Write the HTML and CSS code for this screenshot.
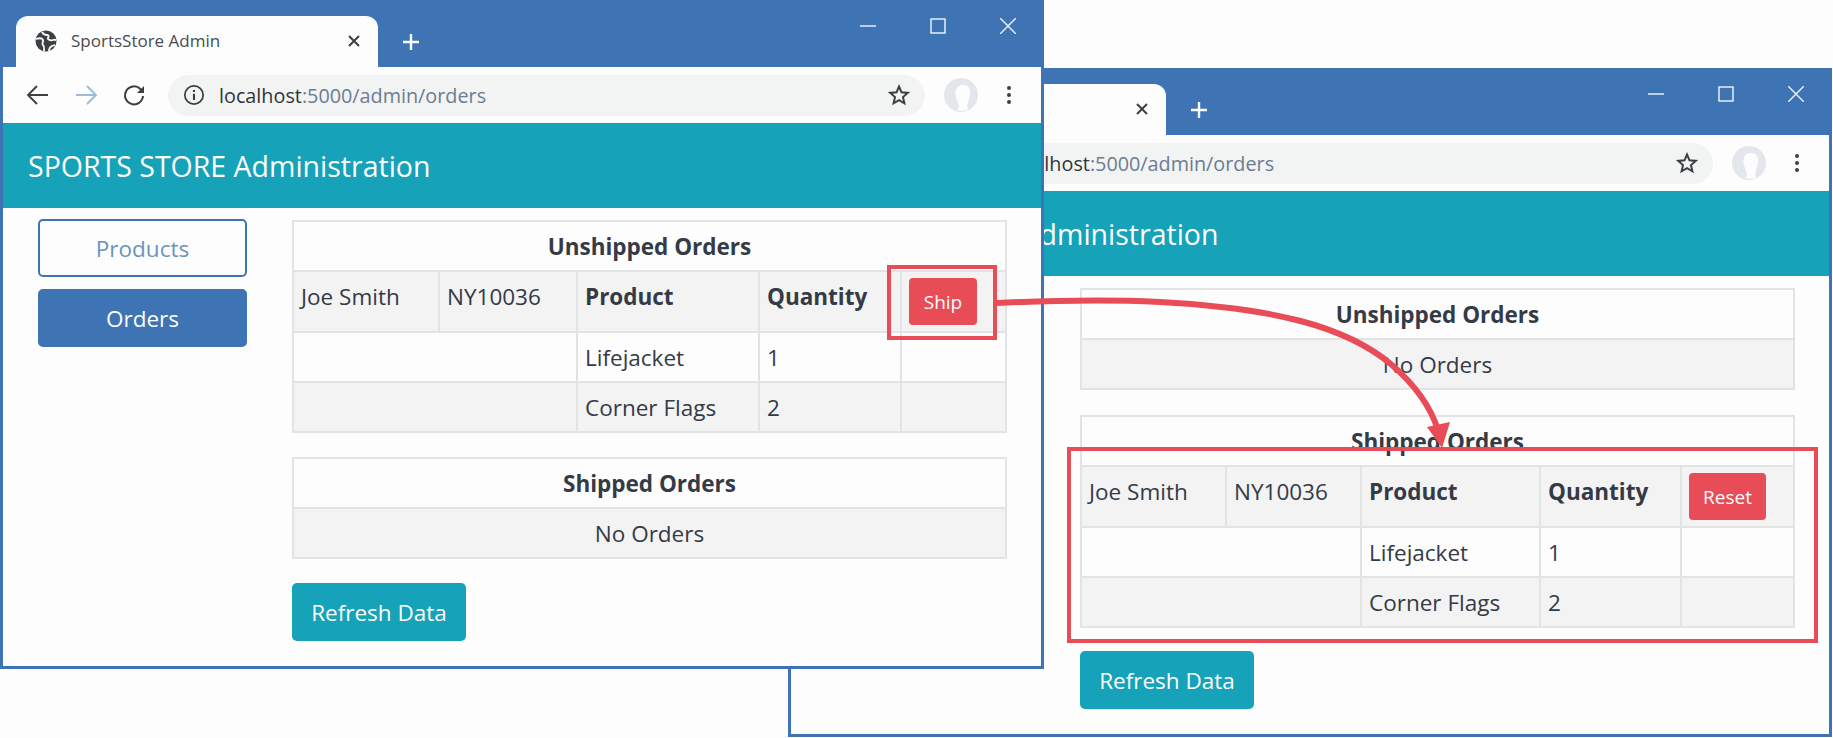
FILE: index.html
```html
<!DOCTYPE html>
<html lang="en">
<head>
<meta charset="UTF-8" />
<title>SportsStore Admin</title>
<link rel="stylesheet" href="styles.css">
</head>
<body>
  <svg class="sprites" width="0" height="0">
    <symbol id="i-globe" viewBox="0 0 24 24">
      <circle cx="12" cy="12" r="10.500" fill="#3c4043"/>
      <path d="M2 10c3-1 6-1 7 1s-2 3 0 5 1 4 1 6M8 3c1 2 3 3 5 3s2 2 1 3 2 3 5 2 2 0 3 0M15 22c0-3 1-4 3-5l3-1" fill="none" stroke="#fdfdfd" stroke-width="1.800"/>
    </symbol>
    <symbol id="i-x" viewBox="0 0 16 16">
      <path d="M3 3l10 10M13 3L3 13" fill="none" stroke="currentColor" stroke-width="2"/>
    </symbol>
    <symbol id="i-plus" viewBox="0 0 18 18">
      <path d="M9 1v16M1 9h16" fill="none" stroke="currentColor" stroke-width="2.400"/>
    </symbol>
    <symbol id="i-arrow" viewBox="0 0 24 24">
      <path d="M22 12H3M11 3l-9 9 9 9" fill="none" stroke="currentColor" stroke-width="1.900"/>
    </symbol>
    <symbol id="i-reload" viewBox="0 0 24 24">
      <path d="M21 13a9 9 0 1 1-2.600-7l2.400 2.400" fill="none" stroke="currentColor" stroke-width="2"/>
      <path d="M22 3v7h-7z" fill="currentColor"/>
    </symbol>
    <symbol id="i-info" viewBox="0 0 24 24">
      <circle cx="12" cy="12" r="10" fill="none" stroke="currentColor" stroke-width="1.900"/>
      <path d="M12 10.500v7M12 6.500v2.200" fill="none" stroke="currentColor" stroke-width="2.300"/>
    </symbol>
    <symbol id="i-star" viewBox="0 0 24 24">
      <path d="M12 3.500l2.500 5.800 6.300.6-4.800 4.200 1.400 6.200L12 17.100l-5.400 3.200L8 14.100 3.200 9.900l6.300-.6z" fill="none" stroke="currentColor" stroke-width="2"/>
    </symbol>
    <symbol id="i-avatar" viewBox="0 0 34 34">
      <circle cx="17" cy="17" r="17" fill="#e3e6ea"/>
      <path d="M13 32c3-3 2-5 0-10-3-7-2-15 6-15s8 8 6 14c-2 5-2 8-1 11-3 1-8 1-11 0z" fill="#fdfdfd"/>
    </symbol>
    <symbol id="i-dots" viewBox="0 0 6 20">
      <circle cx="3" cy="3" r="2" fill="currentColor"/>
      <circle cx="3" cy="10" r="2" fill="currentColor"/>
      <circle cx="3" cy="17" r="2" fill="currentColor"/>
    </symbol>
    <symbol id="i-min" viewBox="0 0 16 16">
      <path d="M0 8h16" fill="none" stroke="currentColor" stroke-width="1.500"/>
    </symbol>
    <symbol id="i-max" viewBox="0 0 16 16">
      <path d="M1 1h14v14H1z" fill="none" stroke="currentColor" stroke-width="1.500"/>
    </symbol>
    <symbol id="i-close" viewBox="0 0 16 16">
      <path d="M0 0l16 16M16 0L0 16" fill="none" stroke="currentColor" stroke-width="1.500"/>
    </symbol>
  </svg>

  <!-- second window, sits behind -->
  <div class="window window-back">
    <div class="tabstrip">
      <div class="tab">
        <svg class="tab-icon"><use href="#i-globe"/></svg>
        <span class="tab-title">SportsStore Admin</span>
        <svg class="tab-close"><use href="#i-x"/></svg>
      </div>
      <svg class="new-tab"><use href="#i-plus"/></svg>
      <div class="win-btns">
        <svg class="win-btn"><use href="#i-min"/></svg>
        <svg class="win-btn"><use href="#i-max"/></svg>
        <svg class="win-btn"><use href="#i-close"/></svg>
      </div>
    </div>
    <div class="toolbar">
      <svg class="nav"><use href="#i-arrow"/></svg>
      <svg class="nav nav-fwd"><use href="#i-arrow"/></svg>
      <svg class="nav"><use href="#i-reload"/></svg>
      <div class="omnibox">
        <svg class="omni-info"><use href="#i-info"/></svg>
        <span class="url"><b>localhost</b>:5000/admin/orders</span>
        <svg class="omni-star"><use href="#i-star"/></svg>
      </div>
      <svg class="avatar"><use href="#i-avatar"/></svg>
      <svg class="dots"><use href="#i-dots"/></svg>
    </div>
    <div class="app-header">SPORTS STORE Administration</div>
    <div class="app-body">
      <div class="side">
        <button class="side-btn">Products</button>
        <button class="side-btn side-btn-on">Orders</button>
      </div>
      <div class="main">
        <table class="orders">
          <tr class="title-row"><th colspan="5">Unshipped Orders</th></tr>
          <tr class="stripe none-row"><td colspan="5">No Orders</td></tr>
        </table>
        <table class="orders orders-back">
          <colgroup><col class="c1"><col class="c2"><col class="c3"><col class="c4"><col class="c5"></colgroup>
          <tr class="title-row"><th colspan="5">Shipped Orders</th></tr>
          <tr class="stripe head-row">
            <td>Joe Smith</td><td>NY10036</td><th>Product</th><th>Quantity</th>
            <td class="act"><button class="act-btn act-btn-reset">Reset</button></td>
          </tr>
          <tr><td colspan="2"></td><td>Lifejacket</td><td>1</td><td></td></tr>
          <tr class="stripe"><td colspan="2"></td><td>Corner Flags</td><td>2</td><td></td></tr>
        </table>
        <button class="refresh">Refresh Data</button>
      </div>
    </div>
  </div>

  <!-- first window, on top -->
  <div class="window window-front">
    <div class="tabstrip">
      <div class="tab">
        <svg class="tab-icon"><use href="#i-globe"/></svg>
        <span class="tab-title">SportsStore Admin</span>
        <svg class="tab-close"><use href="#i-x"/></svg>
      </div>
      <svg class="new-tab"><use href="#i-plus"/></svg>
      <div class="win-btns">
        <svg class="win-btn"><use href="#i-min"/></svg>
        <svg class="win-btn"><use href="#i-max"/></svg>
        <svg class="win-btn"><use href="#i-close"/></svg>
      </div>
    </div>
    <div class="toolbar">
      <svg class="nav"><use href="#i-arrow"/></svg>
      <svg class="nav nav-fwd"><use href="#i-arrow"/></svg>
      <svg class="nav"><use href="#i-reload"/></svg>
      <div class="omnibox">
        <svg class="omni-info"><use href="#i-info"/></svg>
        <span class="url"><b>localhost</b>:5000/admin/orders</span>
        <svg class="omni-star"><use href="#i-star"/></svg>
      </div>
      <svg class="avatar"><use href="#i-avatar"/></svg>
      <svg class="dots"><use href="#i-dots"/></svg>
    </div>
    <div class="app-header">SPORTS STORE Administration</div>
    <div class="app-body">
      <div class="side">
        <button class="side-btn">Products</button>
        <button class="side-btn side-btn-on">Orders</button>
      </div>
      <div class="main">
        <table class="orders orders-front">
          <colgroup><col class="c1"><col class="c2"><col class="c3"><col class="c4"><col class="c5"></colgroup>
          <tr class="title-row"><th colspan="5">Unshipped Orders</th></tr>
          <tr class="stripe head-row">
            <td>Joe Smith</td><td>NY10036</td><th>Product</th><th>Quantity</th>
            <td class="act"><button class="act-btn">Ship</button></td>
          </tr>
          <tr><td colspan="2"></td><td>Lifejacket</td><td>1</td><td></td></tr>
          <tr class="stripe"><td colspan="2"></td><td>Corner Flags</td><td>2</td><td></td></tr>
        </table>
        <table class="orders">
          <tr class="title-row"><th colspan="5">Shipped Orders</th></tr>
          <tr class="stripe none-row"><td colspan="5">No Orders</td></tr>
        </table>
        <button class="refresh">Refresh Data</button>
      </div>
    </div>
  </div>

  <!-- red callouts drawn over both windows -->
  <div class="callout callout-ship"></div>
  <div class="callout callout-reset"></div>
  <svg class="callout-arrow" width="1833" height="738" viewBox="0 0 1833 738">
    <path d="M997 303C1040 301 1100 299 1160 302C1270 308 1345 325 1392 365C1415 385 1430 405 1438 430" fill="none" stroke="#e84c57" stroke-width="6"/>
    <path d="M1427 427L1450 422L1442 448z" fill="#e84c57"/>
  </svg>
</body>
</html>
```

FILE: styles.css
```css
body {
  margin: 0;
  width: 1833px;
  height: 738px;
  position: relative;
  overflow: hidden;
  background: #fdfdfd;
  color: #343a46;
  font-family: "Open Sans", "Noto Sans", sans-serif;
  font-size: 22.500px;
}
.sprites {
  position: absolute;
}

/* browser windows */
.window {
  position: absolute;
  box-sizing: border-box;
  width: 1044px;
  height: 669px;
  border: 3px solid #3e73b4;
  border-top-width: 2px;
  background: #fdfdfd;
}
.window-front {
  left: 0;
  top: 0;
}
.window-back {
  left: 788px;
  top: 68px;
}

/* tab strip */
.tabstrip {
  height: 65px;
  background: #3e73b4;
  display: flex;
  align-items: flex-end;
}
.tab {
  box-sizing: border-box;
  width: 362px;
  height: 51px;
  margin-left: 13px;
  padding: 0 16px 2px 18px;
  background: #fdfdfd;
  border-radius: 12px 12px 0 0;
  display: flex;
  align-items: center;
}
.tab-icon {
  width: 24px;
  height: 24px;
}
.tab-title {
  margin-left: 13px;
  flex: 1;
  font-size: 17px;
  color: #474c52;
}
.tab-close {
  width: 16px;
  height: 16px;
  color: #3c4043;
}
.new-tab {
  width: 18px;
  height: 18px;
  margin: 0 0 16px 24px;
  color: #fdfdfd;
}
.win-btns {
  margin-left: auto;
  align-self: flex-start;
  padding: 16px 25px 0 0;
  display: flex;
  gap: 54px;
}
.win-btn {
  width: 16px;
  height: 16px;
  color: #e6eef6;
}

/* toolbar */
.toolbar {
  height: 56px;
  padding-left: 23px;
  display: flex;
  align-items: center;
  color: #3c4043;
}
.nav {
  width: 24px;
  height: 24px;
  margin-right: 24px;
}
.nav-fwd {
  color: #9dbbd6;
  transform: scaleX(-1);
}
.omnibox {
  box-sizing: border-box;
  width: 757px;
  height: 41px;
  margin-left: -2px;
  padding: 0 14px 0 15px;
  background: #f2f3f3;
  border-radius: 21px;
  display: flex;
  align-items: center;
}
.omni-info {
  width: 22px;
  height: 22px;
}
.url {
  margin-left: 14px;
  flex: 1;
  font-size: 19.800px;
  color: #6b7d92;
}
.url b {
  font-weight: normal;
  color: #30343a;
}
.omni-star {
  width: 24px;
  height: 24px;
  margin-left: 1px;
}
.avatar {
  width: 34px;
  height: 34px;
  margin-left: 19px;
}
.dots {
  width: 6px;
  height: 20px;
  margin-left: 28px;
}

/* app */
.app-header {
  box-sizing: border-box;
  height: 85px;
  padding: 25px 0 0 25px;
  background: #16a2b8;
  color: #fdfdfd;
  font-size: 28.500px;
  line-height: 36px;
}
.app-body {
  display: flex;
  align-items: flex-start;
}
.side {
  width: 209px;
  margin: 11px 0 0 35px;
  display: flex;
  flex-direction: column;
  gap: 12px;
}
.side-btn {
  height: 58px;
  border: 2px solid #3e73b4;
  border-radius: 5px;
  background: #fdfdfd;
  color: #6a94bf;
  font: inherit;
}
.side-btn-on {
  background: #3e73b4;
  color: #fdfdfd;
}
.main {
  width: 715px;
  margin: 12px 0 0 45px;
}

/* order tables */
.orders {
  width: 100%;
  margin-bottom: 24px;
  table-layout: fixed;
  border-collapse: collapse;
}
.orders th,
.orders td {
  border: 2px solid #e2e3e5;
  padding: 9px 7px 7px;
  line-height: 32px;
  height: 50px;
  box-sizing: border-box;
  text-align: left;
  vertical-align: top;
}
.orders .title-row th,
.orders .none-row td {
  text-align: center;
}
.stripe {
  background: #f3f3f3;
}
.head-row td,
.head-row th {
  height: 61px;
}
.orders-front .c1 { width: 146px; }
.orders-front .c2 { width: 138px; }
.orders-front .c3 { width: 182px; }
.orders-front .c4 { width: 142px; }
.orders-back {
  margin-top: 25px;
  margin-bottom: 23px;
}
.orders-back .c1 { width: 145px; }
.orders-back .c2 { width: 135px; }
.orders-back .c3 { width: 179px; }
.orders-back .c4 { width: 141px; }
.orders td.act {
  padding: 6px 7px;
}
.act-btn {
  display: block;
  width: 68px;
  height: 47px;
  border: 0;
  border-radius: 4px;
  background: #e84c57;
  color: #fdfdfd;
  font-family: inherit;
  font-size: 19px;
}
.act-btn-reset {
  width: 77px;
}
.refresh {
  display: block;
  width: 174px;
  height: 58px;
  border: 0;
  border-radius: 5px;
  background: #16a2b8;
  color: #fdfdfd;
  font: inherit;
}

/* callouts */
.callout {
  position: absolute;
  box-sizing: border-box;
  border: 4px solid #e84c57;
}
.callout-ship {
  left: 887px;
  top: 265px;
  width: 110px;
  height: 75px;
}
.callout-reset {
  left: 1067px;
  top: 447px;
  width: 751px;
  height: 196px;
}
.callout-arrow {
  position: absolute;
  left: 0;
  top: 0;
}
```
